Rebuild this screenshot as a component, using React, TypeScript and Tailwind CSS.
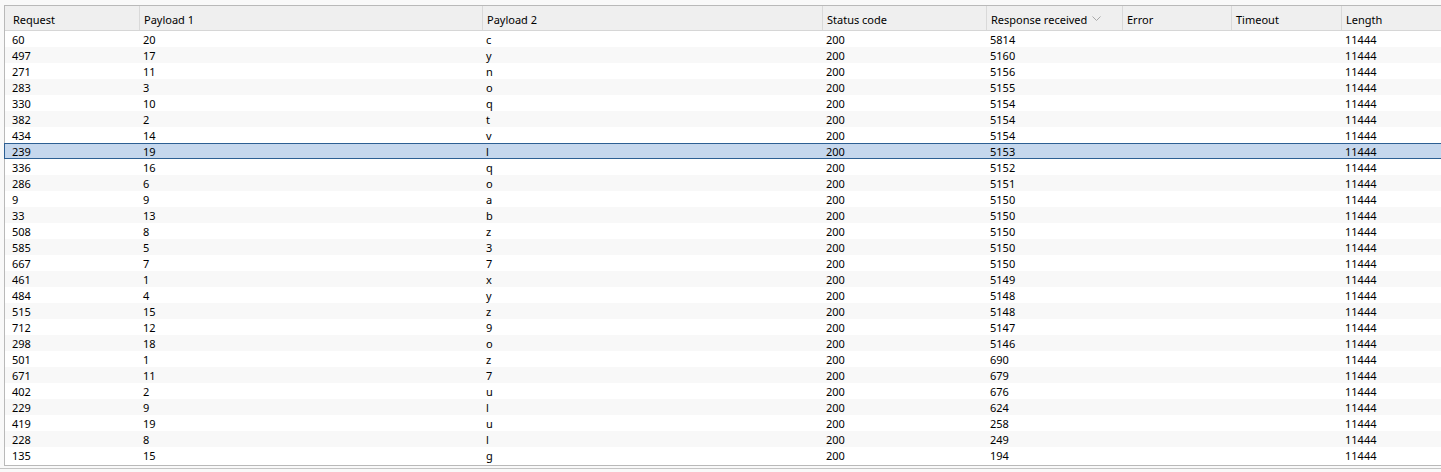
const columns = [
  { label: "Request", width: "w-[135px]", pad: "pl-[8px]" },
  { label: "Payload 1", width: "w-[343px]", pad: "pl-[4px]" },
  { label: "Payload 2", width: "w-[340px]", pad: "pl-[4px]" },
  { label: "Status code", width: "w-[164px]", pad: "pl-[4px]" },
  { label: "Response received", width: "w-[136px]", pad: "pl-[4px]", sorted: true },
  { label: "Error", width: "w-[109px]", pad: "pl-[4px]" },
  { label: "Timeout", width: "w-[110px]", pad: "pl-[4px]" },
  { label: "Length", width: "flex-1", pad: "pl-[4px]" },
];

const rows: [string, string, string, string][] = [
  ["60", "20", "c", "5814"],
  ["497", "17", "y", "5160"],
  ["271", "11", "n", "5156"],
  ["283", "3", "o", "5155"],
  ["330", "10", "q", "5154"],
  ["382", "2", "t", "5154"],
  ["434", "14", "v", "5154"],
  ["239", "19", "l", "5153"],
  ["336", "16", "q", "5152"],
  ["286", "6", "o", "5151"],
  ["9", "9", "a", "5150"],
  ["33", "13", "b", "5150"],
  ["508", "8", "z", "5150"],
  ["585", "5", "3", "5150"],
  ["667", "7", "7", "5150"],
  ["461", "1", "x", "5149"],
  ["484", "4", "y", "5148"],
  ["515", "15", "z", "5148"],
  ["712", "12", "9", "5147"],
  ["298", "18", "o", "5146"],
  ["501", "1", "z", "690"],
  ["671", "11", "7", "679"],
  ["402", "2", "u", "676"],
  ["229", "9", "l", "624"],
  ["419", "19", "u", "258"],
  ["228", "8", "l", "249"],
  ["135", "15", "g", "194"],
];

const SELECTED = 7;

const App = () => {
  return (
    <div
      className="w-[1441px] h-[472px] bg-[#f9f9f9] pt-[5px] overflow-hidden text-[11px] text-black"
      style={{ fontFamily: '"Noto Sans", "Open Sans", sans-serif' }}
    >
      <div className="ml-[4px] border-t border-l border-b border-[#b9b9b9] bg-white">
        {/* header */}
        <div className="flex h-[25px] bg-[#efefef] border-b border-[#d6d6d6]">
          {columns.map((col, i) => (
            <div
              key={col.label}
              className={`${col.width} ${col.pad} pt-[2px] flex items-center shrink-0 ${
                i < columns.length - 1 ? "border-r border-[#d9d9d9]" : ""
              }`}
            >
              <span className="leading-none">{col.label}</span>
              {col.sorted && (
                <svg className="ml-[5px]" width="9" height="6" viewBox="0 0 9 6">
                  <path d="M0.5 0.5 L4.5 4.5 L8.5 0.5" fill="none" stroke="#a8a8a8" strokeWidth="1" />
                </svg>
              )}
            </div>
          ))}
        </div>

        {/* rows */}
        <div className="-ml-px">
          {rows.map((r, idx) => {
            const selected = idx === SELECTED;
            const cells = [r[0], r[1], r[2], "200", r[3], "", "", "11444"];
            return (
              <div
                key={idx}
                className={`flex h-[16px] items-center pt-[1px] ${
                  selected
                    ? "bg-[#c5d7ed] border-y border-l border-[#2d5f93]"
                    : idx % 2 === 1
                    ? "bg-[#f8f8f8] border-l border-[#b9b9b9]"
                    : "bg-white border-l border-[#b9b9b9]"
                }`}
              >
                {cells.map((c, ci) => (
                  <div
                    key={ci}
                    className={`${columns[ci].width} ${columns[ci].pad} ${ci === 0 ? "-ml-px" : ""} shrink-0 leading-none`}
                  >
                    {c}
                  </div>
                ))}
              </div>
            );
          })}
        </div>
        <div className="h-[2px]" />
      </div>
      <div className="h-[2px]" />
      <div className="border-t border-[#c4c4c4]" />
    </div>
  );
};

export default App;
